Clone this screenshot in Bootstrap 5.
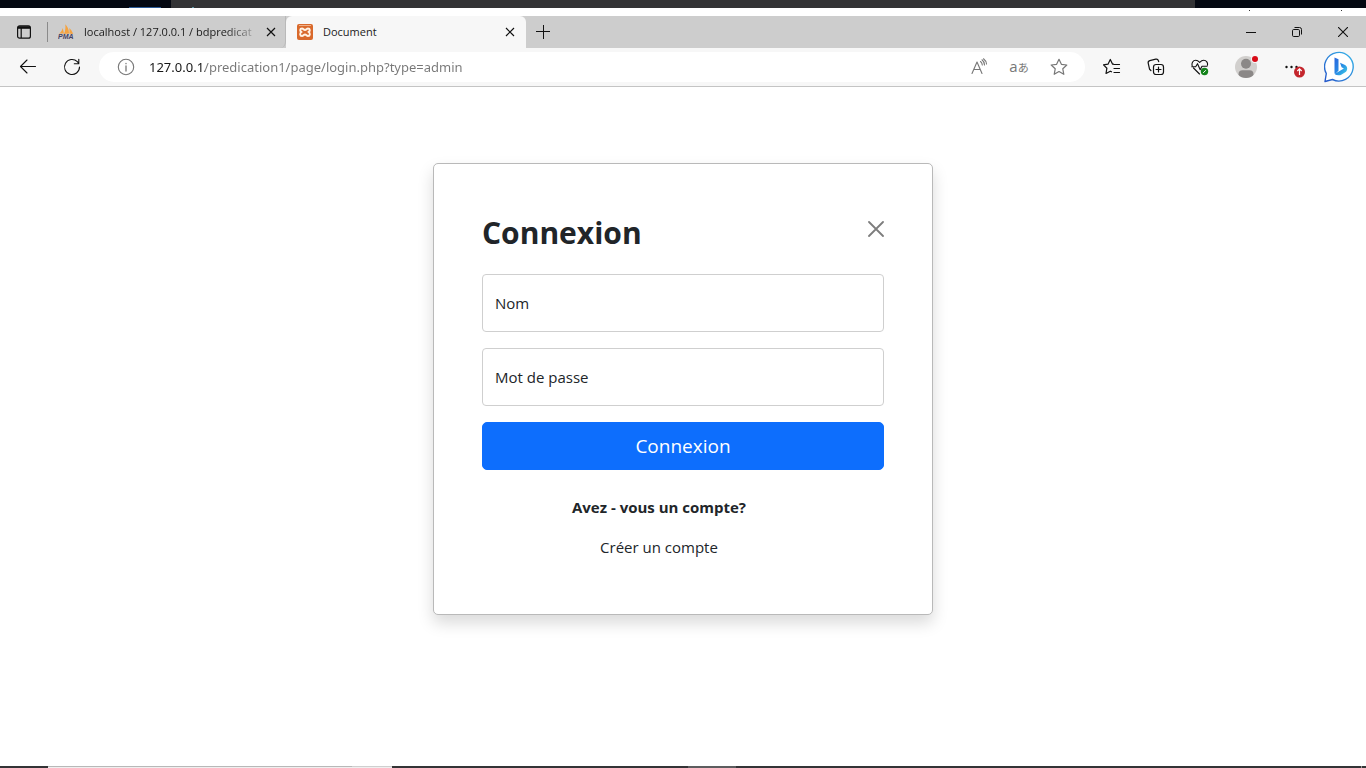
<!DOCTYPE html>
<html lang="fr">
<head>
<meta charset="utf-8">
<meta name="viewport" content="width=device-width, initial-scale=1">
<title>Document</title>
<link href="https://cdn.jsdelivr.net/npm/bootstrap@5.3.0/dist/css/bootstrap.min.css" rel="stylesheet">
<style>
  body { font-family: "Open Sans", "Noto Sans", "Noto Sans CJK JP", sans-serif; font-size: 15px; background: #fff; }
  button.ui { border: 0; background: none; padding: 0; color: #111; display: flex; align-items: center; justify-content: center; flex: none; }
  svg { display: block; flex: none; }
  .line-icon { fill: none; stroke: currentColor; stroke-linecap: round; stroke-linejoin: round; }

  /* slices of the desktop above and below the browser */
  .desk-top { height: 8px; background: #040811; }
  .desk-blue { width: 32px; height: 1px; margin-left: 129px; background: #2a5a96; }
  .desk-window { width: 1024px; height: 8px; margin-left: 10px; background: #333335; }
  .desk-dot { width: 2px; height: 1px; margin-left: 21px; background: #5b93a3; }
  .gap-line { height: 8px; }
  .speck { width: 1px; height: 1px; background: #333; margin-top: 2px; }
  .task-bar { height: 2px; background: #343436; }
  .task-search { margin-left: 48px; width: 304px; background: #efefef; border-top: 1px solid #b8b8b8; }
  .task-icon { width: 40px; background: #efefef; border-top: 1px solid #cfcfcf; }
  .task-active { margin-left: 296px; width: 48px; background: #5d5d5f; }
  .task-edge { width: 1px; margin-right: 4px; background: #999; }

  .tab-strip { height: 32px; background: #cdcdcd; font-size: 11px; color: #1b1b1b; }
  .strip-menu { width: 47px; }
  .strip-rule { width: 1px; height: 20px; background: #8a8a8a; }
  .browser-tab { width: 240px; height: 32px; padding: 0 8px 0 11px; }
  .browser-tab.first { width: 238px; padding-left: 10px; padding-right: 6px; border-right: 1px solid #b9b9b9; border-radius: 0 0 6px 0; }
  .browser-tab.current { background: #f7f7f7; border-radius: 6px 6px 0 0; }
  .tab-title { margin-left: 10px; line-height: 16px; white-space: nowrap; flex: 1 1 0; min-width: 0; }
  .fade-end { -webkit-mask-image: linear-gradient(90deg, #000 82%, rgba(0,0,0,.15) 100%); mask-image: linear-gradient(90deg, #000 82%, rgba(0,0,0,.15) 100%); }
  .tab-x { width: 16px; height: 16px; margin-left: 6px; }
  .new-tab { width: 34px; height: 32px; }
  .win-btn { width: 46px; height: 32px; }

  .tool-bar { height: 39px; background: #f7f7f7; border-bottom: 1px solid #c4c4c4; padding: 0 4px 0 6px; }
  .tool { width: 44px; height: 32px; }
  .tool.wide { width: 48px; }
  .address { height: 30px; margin: 0 5px 0 5px; padding: 0 6px 0 18px; border-radius: 15px; background: #fff; color: #777; }
  .address button.ui { width: 40px; height: 30px; color: #777; }
  .address button.site-info { width: 18px; }
  .url { border: 0; outline: 0; padding: 0; margin-left: 14px; height: 20px; font-family: "Noto Sans", sans-serif; font-size: 13px; min-width: 0;
         background: linear-gradient(90deg, #161616 56px, #777 56px); -webkit-background-clip: text; background-clip: text; color: transparent; }
  .address .translate { font-size: 15px; line-height: 16px; }
  .translate small { font-size: 11px; }

  .login-card { width: 500px; max-width: 100%; margin: 76px 16px 0; background: #fff; border: 1px solid #b9b9b9; border-radius: 5px;
                padding: 48px; box-shadow: 0 8px 16px rgba(0,0,0,.15); }
  .login-title { font-size: 30px; line-height: 38px; padding-top: 2px; margin-bottom: 22px; }
  .dismiss { width: 16px; height: 16px; margin-top: 9px; }
  .login-card .form-control { height: 58px; border-radius: 4px; border-color: #cfcfcf; font-size: 15px; padding-left: 12px; }
  .login-card .form-floating > label { padding: 16px 12px; line-height: 24px; }
  .login-btn { height: 48px; font-size: 19px; border-radius: 5px; padding: 0; background: #0d6efd; }
  .account { padding: 25px 48px 7px 0; line-height: 24px; }
</style>
</head>
<body class="d-flex flex-column min-vh-100">

<div class="desk-top d-flex align-items-end overflow-hidden">
  <div class="desk-blue"></div>
  <div class="desk-window d-flex align-items-end"><div class="desk-dot"></div></div>
</div>
<div class="gap-line d-flex justify-content-end">
  <div class="speck" style="margin-right:91px"></div>
  <div class="speck" style="margin-right:24px"></div>
</div>

<header>
  <div class="tab-strip d-flex align-items-center">
    <button class="ui strip-menu" aria-label="Onglets">
      <svg width="16" height="16" viewBox="0 0 16 16" fill="none" stroke="#111" stroke-width="1.2"><rect x="1.6" y="1.8" width="12.8" height="12.4" rx="2"/><path d="M2 3.500h12" stroke-width="2.600"/><path d="M5.200 4v10"/></svg>
    </button>
    <div class="strip-rule"></div>
    <div class="browser-tab first d-flex align-items-center">
      <svg width="16" height="16" viewBox="0 0 16 16"><path d="M1 9.500C2.500 8.500 4 7 4.700 4L6 9.500ZM6 9.900C7.300 7 7.700 4 7.300.3c2 2.200 3.600 5 3.800 9.200ZM11.300 9.600c.4-2 .3-3.500-.1-5.500 1.800 1.500 3 3.500 4 5.900Z" fill="#f5a340"/><text x="0" y="15" font-family="Liberation Sans, sans-serif" font-size="7" font-weight="bold" font-style="italic" fill="#454164">PMA</text></svg>
      <span class="tab-title fade-end">localhost / 127.0.0.1 / bdpredicat</span>
      <button class="ui tab-x" aria-label="Fermer l'onglet"><svg width="10" height="10" viewBox="0 0 10 10" stroke="#111" stroke-width="1.2"><path d="M1 1l8 8M9 1L1 9"/></svg></button>
    </div>
    <div class="browser-tab current d-flex align-items-center">
      <svg width="16" height="16" viewBox="0 0 16 16"><rect width="16" height="16" rx="2" fill="#d9692b"/><path d="M2 1.500h12" stroke="#efb08a"/><path d="M4.600 8C2.500 7.300 2.700 4.500 5 4.500c1.500 0 1.500 1.500 3 1.500s1.500-1.500 3-1.500c2.300 0 2.500 2.800.4 3.500 2.100.9 1.900 4-.4 4-1.500 0-1.500-1.500-3-1.500S6.500 12 5 12c-2.300 0-2.500-3.100-.4-4Z" fill="none" stroke="#fff2e4" stroke-width="1.900" stroke-linejoin="round"/></svg>
      <span class="tab-title">Document</span>
      <button class="ui tab-x" aria-label="Fermer l'onglet"><svg width="10" height="10" viewBox="0 0 10 10" stroke="#111" stroke-width="1.2"><path d="M1 1l8 8M9 1L1 9"/></svg></button>
    </div>
    <button class="ui new-tab" aria-label="Nouvel onglet"><svg width="14" height="14" viewBox="0 0 14 14" stroke="#111" stroke-width="1"><path d="M0 6.500h14M7.500 0v14"/></svg></button>
    <div class="d-flex ms-auto">
      <button class="ui win-btn" aria-label="Réduire"><svg width="10" height="10" viewBox="0 0 10 10" stroke="#111"><path d="M0 5.500h10"/></svg></button>
      <button class="ui win-btn" aria-label="Restaurer"><svg width="12" height="12" viewBox="0 0 12 12" fill="none" stroke="#111"><rect x="1.500" y="3.500" width="7" height="7" rx="1.200"/><path d="M3.500 1.500h5a2 2 0 0 1 2 2v5"/></svg></button>
      <button class="ui win-btn" aria-label="Fermer"><svg width="10" height="10" viewBox="0 0 10 10" stroke="#111" stroke-width="1.100"><path d="M0 0l10 10M10 0L0 10"/></svg></button>
    </div>
  </div>

  <div class="tool-bar d-flex align-items-center">
    <button class="ui tool" aria-label="Retour"><svg class="line-icon" width="18" height="16" viewBox="0 0 18 16" stroke-width="1.100"><path d="M16.500 7.500H1.500M8 1L1.500 7.500 8 14"/></svg></button>
    <button class="ui tool" aria-label="Actualiser"><svg class="line-icon" width="18" height="18" viewBox="0 0 18 18" stroke-width="1.100"><path d="M16.500 9A7.500 7.500 0 1 1 14.300 3.700L15.800 5.500M15.800 1.200v4.500h-4.500"/></svg></button>
    <div class="address d-flex align-items-center flex-grow-1">
      <button class="ui site-info" aria-label="Informations sur le site"><svg class="line-icon" width="18" height="18" viewBox="0 0 18 18" stroke-width="1.100"><circle cx="9" cy="9" r="7.700"/><path d="M9 8v5M9 5.300v.4" stroke-width="1.300"/></svg></button>
      <input class="url flex-grow-1" type="text" aria-label="Adresse" value="127.0.0.1/predication1/page/login.php?type=admin">
      <button class="ui" aria-label="Lecture à voix haute"><svg class="line-icon" width="18" height="18" viewBox="0 0 18 18" stroke-width="1.100"><path d="M2 15.500L7 4l5 11.500M3.700 11.500h6.600M10.500 3.500c1.200.9 1.700 1.900 1.800 3.500M12 1.800c1.600 1.300 2.500 2.900 2.500 5.200M13.500.8c1.900 1.500 2.900 3 3 5.200"/></svg></button>
      <button class="ui translate" aria-label="Traduire"><span>a<small>あ</small></span></button>
      <button class="ui" aria-label="Ajouter aux favoris"><svg class="line-icon" width="18" height="18" viewBox="0 0 18 18" stroke-width="1.200"><path d="M9 1.300l2.400 5 5.400.7-4 3.800 1 5.500L9 13.600l-4.800 2.700 1-5.500-4-3.800 5.400-.7Z"/></svg></button>
    </div>
    <button class="ui tool" aria-label="Favoris"><svg class="line-icon" width="18" height="18" viewBox="0 0 18 18" stroke-width="1.200"><path d="M10.500 6.200H9.600L7.300 1.500 5 6.200l-4.500.7 3.400 3.300-.9 5.300 4.300-2.300 1.200.6M11 6.500h5.500M11 10.500h5.500M11 14.500h5.500"/></svg></button>
    <button class="ui tool" aria-label="Collections"><svg class="line-icon" width="18" height="18" viewBox="0 0 18 18" stroke-width="1.200"><path d="M3.900 12.500L2.600 11.300 1.200 5.200a2.200 2.200 0 0 1 1.600-2.600l6-1.400a2.200 2.200 0 0 1 2.600 1.500l.3 1"/><rect x="6.500" y="6.500" width="10" height="10" rx="2.500"/><path d="M11.500 9v5M9 11.500h5"/></svg></button>
    <button class="ui tool" aria-label="Performances"><svg width="18" height="18" viewBox="0 0 18 18"><g class="line-icon" stroke-width="1.100"><path d="M1.200 7.800C.4 5 2 2.300 4.700 2.300c1.800 0 2.900.9 4 2 1.100-1.100 2.200-2 4-2 2.700 0 4.400 2.500 3.700 5M2.500 10l6 6M.8 8.700h3.900l1.800-3 2.700 6 1.800-3.500h5"/></g><circle cx="13.500" cy="13.500" r="3.700" fill="#13831b"/><path d="M12.200 14.900l2.700-2.700" stroke="#fff"/></svg></button>
    <button class="ui tool wide" aria-label="Profil"><svg width="26" height="28" viewBox="0 0 26 28"><defs><clipPath id="face"><circle cx="13" cy="14" r="11"/></clipPath></defs><circle cx="13" cy="14" r="11" fill="#d1cfcd"/><g clip-path="url(#face)" fill="#8b8887"><circle cx="13" cy="10.800" r="5"/><rect x="5.500" y="17.300" width="15" height="10" rx="4"/></g><circle cx="22" cy="6" r="4" fill="#f7f7f7"/><circle cx="22" cy="6" r="3" fill="#d80b18"/></svg></button>
    <button class="ui tool wide" aria-label="Paramètres et plus"><svg width="22" height="22" viewBox="0 0 22 22"><g fill="#111"><circle cx="3.500" cy="11" r="1.200"/><circle cx="8.500" cy="11" r="1.200"/><circle cx="13.500" cy="11" r="1.200"/></g><circle cx="16.500" cy="16" r="5.500" fill="#c4262d"/><path d="M16.500 19v-6M14.300 15l2.200-2.200 2.200 2.200" fill="none" stroke="#fff" stroke-width="1.200"/></svg></button>
    <button class="ui tool" aria-label="Bing"><svg width="32" height="32" viewBox="0 0 32 32"><defs><linearGradient id="ring" x1="1" y1="0" x2="0" y2="1"><stop stop-color="#38b7ea"/><stop offset="1" stop-color="#2456c9"/></linearGradient><linearGradient id="bee" x1="0" y1="0" x2="1" y2="1"><stop stop-color="#2b66dd"/><stop offset=".5" stop-color="#2789e4"/><stop offset="1" stop-color="#3fd0e6"/></linearGradient></defs><path d="M1 30.500L2.300 22.500A14.300 14.300 0 1 1 8.500 28.500Z" fill="#fff" stroke="url(#ring)" stroke-width="1.400" stroke-linejoin="round"/><path d="M10.500 6.500l4 1.700v11.600l-3.700 3.400c2 1.500 4.800 1.500 6.900.2l4.300-2.600c2.300-2.500 1.200-6-1.500-7.100l-4.500-1.900 1.600 4.400 2.300 1.200-8.900 5.300-.5-.1Z" fill="url(#bee)"/></svg></button>
  </div>
</header>

<main class="flex-grow-1 d-flex justify-content-center align-items-start">
  <form class="login-card" onsubmit="return false">
    <div class="d-flex justify-content-between align-items-start">
      <h1 class="login-title fw-bold">Connexion</h1>
      <button type="button" class="ui dismiss" aria-label="Fermer"><svg class="line-icon" width="16" height="16" viewBox="0 0 16 16" stroke-width="1.800" style="color:#7d7d7d"><path d="M1 1l14 14M15 1L1 15"/></svg></button>
    </div>
    <div class="form-floating mb-3">
      <input type="text" class="form-control" id="nom" placeholder="Nom">
      <label for="nom">Nom</label>
    </div>
    <div class="form-floating mb-3">
      <input type="password" class="form-control" id="mdp" placeholder="Mot de passe">
      <label for="mdp">Mot de passe</label>
    </div>
    <button type="submit" class="btn btn-primary login-btn w-100">Connexion</button>
    <div class="account text-center">
      <p class="fw-bold mb-3">Avez - vous un compte?</p>
      <a href="#" class="text-body text-decoration-none">Créer un compte</a>
    </div>
  </form>
</main>

<div class="task-bar d-flex">
  <div class="task-search"></div>
  <div class="task-icon"></div>
  <div class="task-active"></div>
  <div class="task-edge ms-auto"></div>
</div>

<script src="https://cdn.jsdelivr.net/npm/bootstrap@5.3.0/dist/js/bootstrap.bundle.min.js"></script>
</body>
</html>
